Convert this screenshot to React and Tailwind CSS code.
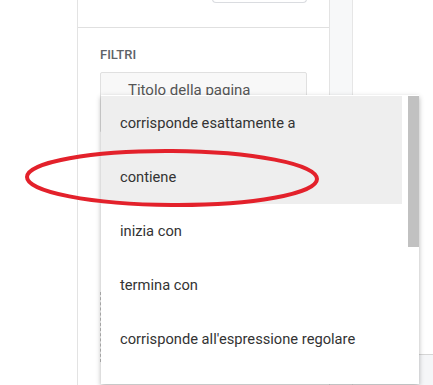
import React from 'react';

const options = [
  { label: 'corrisponde esattamente a', active: true },
  { label: 'contiene', active: true },
  { label: 'inizia con', active: false },
  { label: 'termina con', active: false },
  { label: "corrisponde all'espressione regolare", active: false },
];

export default function App() {
  return (
    <div
      className="relative w-[433px] h-[385px] overflow-hidden bg-white"
      style={{ fontFamily: 'Roboto, "Liberation Sans", sans-serif' }}
    >
      <div className="flex h-full">
        <div className="w-[77px] shrink-0" />

        {/* Side panel */}
        <div className="w-[253px] shrink-0 border-x border-[#e3e3e3] flex flex-col">
          <div className="h-[28px] border-b border-[#e0e0e0] flex justify-end pr-[22px]">
            <div className="w-[95px] h-[4px] -mt-px border border-t-0 border-[#dadce0] rounded-b-[4px]" />
          </div>

          <div className="pl-[22px] pr-[22px] pt-[20px]">
            <div className="text-[13px] font-medium text-[#5f6368] leading-[14px]">FILTRI</div>
            <div className="mt-[10px] h-[60px] border border-[#e0e0e0] bg-[#f8f8f8] rounded-t-[2px] pl-[27px] pt-[6px] text-[15px] text-[#555]">
              Titolo della pagina
            </div>
            <div className="mt-[160px] h-[70px] border-l border-dashed border-[#bdbdbd]" />
          </div>
        </div>

        {/* Grey strip */}
        <div className="w-[23px] shrink-0 bg-[#f7f8f9] border-r border-[#e6e6e6]" />

        <div className="flex-1 flex flex-col">
          <div className="h-[354px]" />
          <div className="flex-1 border-t border-[#d6d6d6] bg-[#f5f6f8]" />
        </div>
      </div>

      {/* Dropdown menu */}
      <div className="absolute left-[101px] top-[95px] w-[318px] h-[289px] bg-white shadow-[0_2px_5px_rgba(0,0,0,0.3)] flex">
        <ul className="flex-1 pt-px">
          {options.map((o) => (
            <li
              key={o.label}
              className={`h-[54px] flex items-center pl-[19px] text-[14.7px] text-[#333] ${o.active ? 'bg-[#eeeeee]' : ''}`}
            >
              {o.label}
            </li>
          ))}
        </ul>
        <div className="w-[17px] pt-px pl-[6px]">
          <div className="w-[11px] h-[151px] bg-[#c1c1c1]" />
        </div>
      </div>

      {/* Red annotation ellipse */}
      <svg className="absolute left-0 top-0 pointer-events-none" width="433" height="385">
        <ellipse cx="172" cy="178" rx="145" ry="27" fill="none" stroke="#e3212b" strokeWidth="4" transform="rotate(0.4 172 178)" />
      </svg>
    </div>
  );
}
